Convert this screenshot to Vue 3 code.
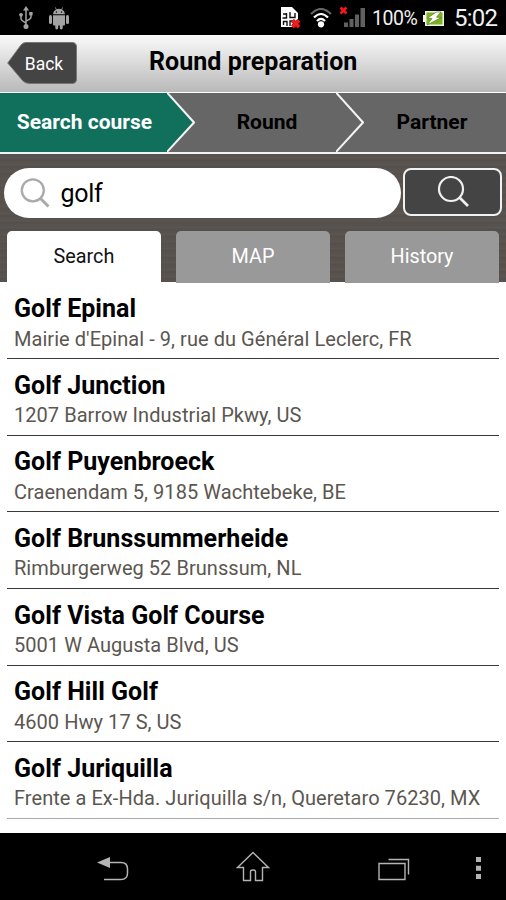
<script setup>
import { ref } from 'vue'

const query = ref('golf')
const activeTab = ref('Search')
const tabs = ['Search', 'MAP', 'History']
const courses = [
  { name: 'Golf Epinal', address: "Mairie d'Epinal - 9, rue du Général Leclerc, FR" },
  { name: 'Golf Junction', address: '1207 Barrow Industrial Pkwy, US' },
  { name: 'Golf Puyenbroeck', address: 'Craenendam 5, 9185 Wachtebeke, BE' },
  { name: 'Golf Brunssummerheide', address: 'Rimburgerweg 52 Brunssum, NL' },
  { name: 'Golf Vista Golf Course', address: '5001 W Augusta Blvd, US' },
  { name: 'Golf Hill Golf', address: '4600 Hwy 17 S, US' },
  { name: 'Golf Juriquilla', address: 'Frente a Ex-Hda. Juriquilla s/n, Queretaro 76230, MX' },
]
</script>

<template>
  <div class="screen">
    <div class="status">
      <svg class="usb" width="14" height="24" viewBox="0 0 14 24">
        <path d="M7 3V20M2 9.500V12.500Q2 14.500 7 17M12 8V11Q12 13 7 15" fill="none" stroke="#a3a3a3" stroke-width="1.500" />
        <path d="M7 0L10 4.500H4Z" fill="#a3a3a3" />
        <circle cx="7" cy="20.500" r="2.500" fill="#a3a3a3" />
        <circle cx="2" cy="8.800" r="1.900" fill="#a3a3a3" />
        <rect x="10.200" y="6" width="3.400" height="3.400" fill="#a3a3a3" />
      </svg>
      <svg class="droid" width="20" height="23" viewBox="0 0 20 23" fill="#a3a3a3">
        <path d="M4 7.300Q4.200 3.800 7 2.500L5.900.6l.6-.4L7.700 2.200Q10 1.400 12.300 2.200L13.500.2l.6.4L13 2.500Q15.800 3.800 16 7.300Z" />
        <rect x="0" y="8" width="3" height="9" rx="1.500" />
        <rect x="17" y="8" width="3" height="9" rx="1.500" />
        <path d="M4 8.200H16V17.500Q16 18.500 15 18.500H13.700V21a1.450 1.450 0 0 1-2.900 0V18.500H9.200V21a1.450 1.450 0 0 1-2.900 0V18.500H5Q4 18.500 4 17.500Z" />
        <circle cx="7.400" cy="5" r=".7" fill="#000" /><circle cx="12.600" cy="5" r=".7" fill="#000" />
      </svg>
      <svg class="sim" width="20" height="23" viewBox="0 0 20 23">
        <path d="M0 0H11L17 6V20H0Z" fill="#fff" />
        <path d="M2 7H5M5.500 6V11H1.500M9 5V10.500H14V6M2.500 18V14.500H6V19M9 19V14H12" fill="none" stroke="#111" stroke-width="1.400" />
        <path d="M11.500 13.500L18 20M18 13.500L11.500 20" stroke="#a31212" stroke-width="4.200" />
        <path d="M11.500 13.500L18 20M18 13.500L11.500 20" stroke="#fb1818" stroke-width="2.700" />
      </svg>
      <svg class="wifi" width="22" height="20" viewBox="0 0 22 20" fill="none" stroke-width="2.200">
        <path d="M1 6Q11-4 21 6" stroke="#666" />
        <path d="M4 9.500Q11 2.500 18 9.500" stroke="#fff" />
        <path d="M7 13Q11 8.800 15 13" stroke="#fff" />
        <circle cx="11" cy="16.300" r="3.100" fill="#fff" />
      </svg>
      <svg class="signal" width="27" height="22" viewBox="0 0 27 22">
        <path d="M5 16.500h4v4.500H5zM10.500 13h4v8h-4zM16 8.500h4v12.500h-4zM21.500 2h4.500v19h-4.500z" fill="#606060" />
        <path d="M1.500 1.500L7.500 7.500M7.500 1.500L1.500 7.500" stroke="#f31919" stroke-width="2.700" />
      </svg>
      <span class="percent">100%</span>
      <svg class="battery" width="22" height="17" viewBox="0 0 22 17">
        <path d="M2 1H21V16H2V12H0V5H2Z" fill="#f4f5ef" />
        <rect x="3.500" y="2.500" width="16" height="12" fill="#79b51b" />
        <path d="M13.500 2L4.500 8L9 8.500L4 15L18.500 7.500L13.500 7.200L18 2Z" fill="#fff" stroke="#577a26" stroke-width=".7" />
      </svg>
      <span class="clock">5:02</span>
    </div>

    <header class="header">
      <button class="back">
        <svg class="back-shape" width="70" height="42" viewBox="0 0 70 42">
          <path d="M.7 21L14 3Q16 .5 19 .5H65Q69.500.5 69.500 5V37Q69.500 41.500 65 41.500H23Q18 41.500 15.500 38.500Z" fill="#444" stroke="#777" />
        </svg>
        <span class="back-label">Back</span>
      </button>
      <h1>Round preparation</h1>
    </header>

    <nav class="steps">
      <span class="step current">Search course</span>
      <svg width="28" height="59" viewBox="0 0 28 59">
        <path d="M0 0H1L27 29.500L0 59Z" fill="#10705c" />
        <path d="M0-.5L27 29.500L-1 60" fill="none" stroke="#f4f4f4" stroke-width="2" />
      </svg>
      <span class="step round">Round</span>
      <svg width="28" height="59" viewBox="0 0 28 59">
        <path d="M0-.5L27 29.500L-1 60" fill="none" stroke="#f4f4f4" stroke-width="2" />
      </svg>
      <span class="step partner">Partner</span>
    </nav>

    <section class="finder">
      <div class="search-row">
        <label class="field">
          <svg width="30" height="31" viewBox="0 0 30 31" fill="none" stroke="#aaa" stroke-width="2.300">
            <circle cx="12.800" cy="12.300" r="11" /><path d="M20.500 20.500L28.500 28.500" stroke-width="3" />
          </svg>
          <input v-model="query" />
        </label>
        <button class="go">
          <svg width="33" height="32" viewBox="0 0 33 32" fill="none" stroke="#f0f0f0" stroke-width="2.200">
            <circle cx="14" cy="13" r="12" /><path d="M22 21L31 30" stroke-width="2.600" />
          </svg>
        </button>
      </div>
      <div class="tabs">
        <button v-for="tab in tabs" :key="tab" class="tab" :class="{ active: tab === activeTab }" @click="activeTab = tab">{{ tab }}</button>
      </div>
    </section>

    <main class="list">
      <article v-for="course in courses" :key="course.name" class="course">
        <h2>{{ course.name }}</h2>
        <p>{{ course.address }}</p>
      </article>
    </main>

    <footer class="navbar">
      <svg class="nav-back" width="33" height="26" viewBox="0 0 33 26">
        <path d="M0 6.500L13 1V12Z" fill="#b4b4b4" />
        <path d="M12 6.500H24Q30.500 6.500 30.500 13V17Q30.500 23.500 24 23.500H7" fill="none" stroke="#b4b4b4" stroke-width="1.500" />
      </svg>
      <svg class="nav-home" width="34" height="31" viewBox="0 0 34 31" fill="none" stroke="#b4b4b4" stroke-width="1.400">
        <path d="M17 1.500L1.500 16.500H7.500V29.500H14.500V20.500Q14.500 19 17 19Q19.500 19 19.500 20.500V29.500H26.500V16.500H32.500Z" />
      </svg>
      <svg class="nav-recent" width="32" height="23" viewBox="0 0 32 23" fill="none" stroke="#b4b4b4" stroke-width="1.400">
        <path d="M1 5.500H27V21.500H1ZM10.500 1.500H30.500V16.500" />
      </svg>
      <svg class="nav-more" width="5" height="23" viewBox="0 0 5 23" fill="#b4b4b4">
        <path d="M0 0h5v5H0zM0 8.700h5v5H0zM0 17h5v5H0z" />
      </svg>
    </footer>
  </div>
</template>

<style>
body { margin: 0; }
</style>

<style scoped>
* { box-sizing: border-box; }
.screen { width: 506px; height: 900px; overflow: hidden; display: flex; flex-direction: column; background: #fff; font-family: Roboto, sans-serif; color: #000; }
svg { display: block; flex: none; }
button { font: inherit; border: 0; padding: 0; }
h1, h2, p { margin: 0; white-space: nowrap; }
.status { height: 35px; flex: none; background: #000; display: flex; align-items: flex-start; color: #f0f0f0; }
.usb { margin: 6px 0 0 19px; }
.droid { margin: 7px 0 0 16px; }
.sim { margin: 7px 0 0 212px; }
.wifi { margin: 8px 0 0 9px; }
.signal { margin: 6px 0 0 7px; }
.percent { width: 44px; margin: 5px 0 0 6px; font-size: 19.500px; line-height: 28px; letter-spacing: -.5px; white-space: nowrap; }
.battery { margin: 10px 0 0 7px; }
.clock { margin: 4px 0 0 9px; font-size: 24px; line-height: 28px; letter-spacing: -.8px; white-space: nowrap; }
.header { height: 57px; flex: none; display: flex; align-items: flex-start; background: linear-gradient(#fafafa, #b9b9b9); }
.back { width: 70px; height: 42px; margin: 7px 0 0 7px; background: none; display: grid; }
.back-shape, .back-label { grid-area: 1 / 1; }
.back-label { color: #fff; font-size: 17.500px; line-height: 44px; padding-left: 4px; z-index: 1; }
h1 { margin: 11px 0 0 72px; font-size: 25px; line-height: 32px; font-weight: 700; letter-spacing: .04px; }
.steps { height: 62px; flex: none; display: flex; border-top: 1px solid #fff; border-bottom: 2px solid #f3f3f3; background: #666; }
.step { height: 59px; line-height: 58px; font-size: 21px; font-weight: 700; text-align: center; white-space: nowrap; }
.step.current { width: 167px; background: #10705c; color: #fff; padding-left: 2px; }
.step.round { width: 141px; padding-left: 3px; }
.step.partner { width: 142px; padding-right: 6px; }
.finder { height: 128px; flex: none; padding: 14px 4px 0; background: repeating-linear-gradient(#58524f 0 2px, #5b5552 3px 4px, #56504d 5px 7px); }
.search-row { display: flex; gap: 2px; height: 51px; }
.field { width: 397px; height: 50px; border-radius: 25px; background: #fff; display: flex; padding: 10px 0 0 16px; }
.field input { width: 300px; height: 32px; border: 0; outline: 0; padding: 0; margin-left: 10.500px; font: 25px/32px Roboto, sans-serif; letter-spacing: -.3px; background: transparent; }
.go { width: 99px; height: 48px; border: 2px solid #f1f1f1; border-radius: 8px; background: #444; padding: 0 0 0 32px; }
.tabs { display: grid; grid-template-columns: repeat(3, 154px); gap: 15px; padding: 12px 3px 0; }
.tab { height: 52px; border-radius: 5px 5px 0 0; background: #999; color: #fff; font-size: 19.800px; line-height: 52px; }
.tab.active { background: #fff; color: #111; }
.list { height: 551px; flex: none; padding: .5px 7px 0; }
.course { height: 76.670px; border-bottom: 1px solid #393939; padding: 11.500px 0 0 7px; }
.course:last-child { border-color: #aaa; }
h2 { font-size: 25px; line-height: 30px; font-weight: 700; letter-spacing: .04px; }
p { font-size: 20px; line-height: 24px; margin-top: 2.500px; color: #5b5650; letter-spacing: .05px; }
.navbar { flex: 1; background: #000; display: flex; align-items: flex-start; }
.nav-back { margin: 23px 0 0 97px; }
.nav-home { margin: 18px 0 0 106px; }
.nav-recent { margin: 25px 0 0 108px; }
.nav-more { margin: 24px 0 0 66px; }
</style>
